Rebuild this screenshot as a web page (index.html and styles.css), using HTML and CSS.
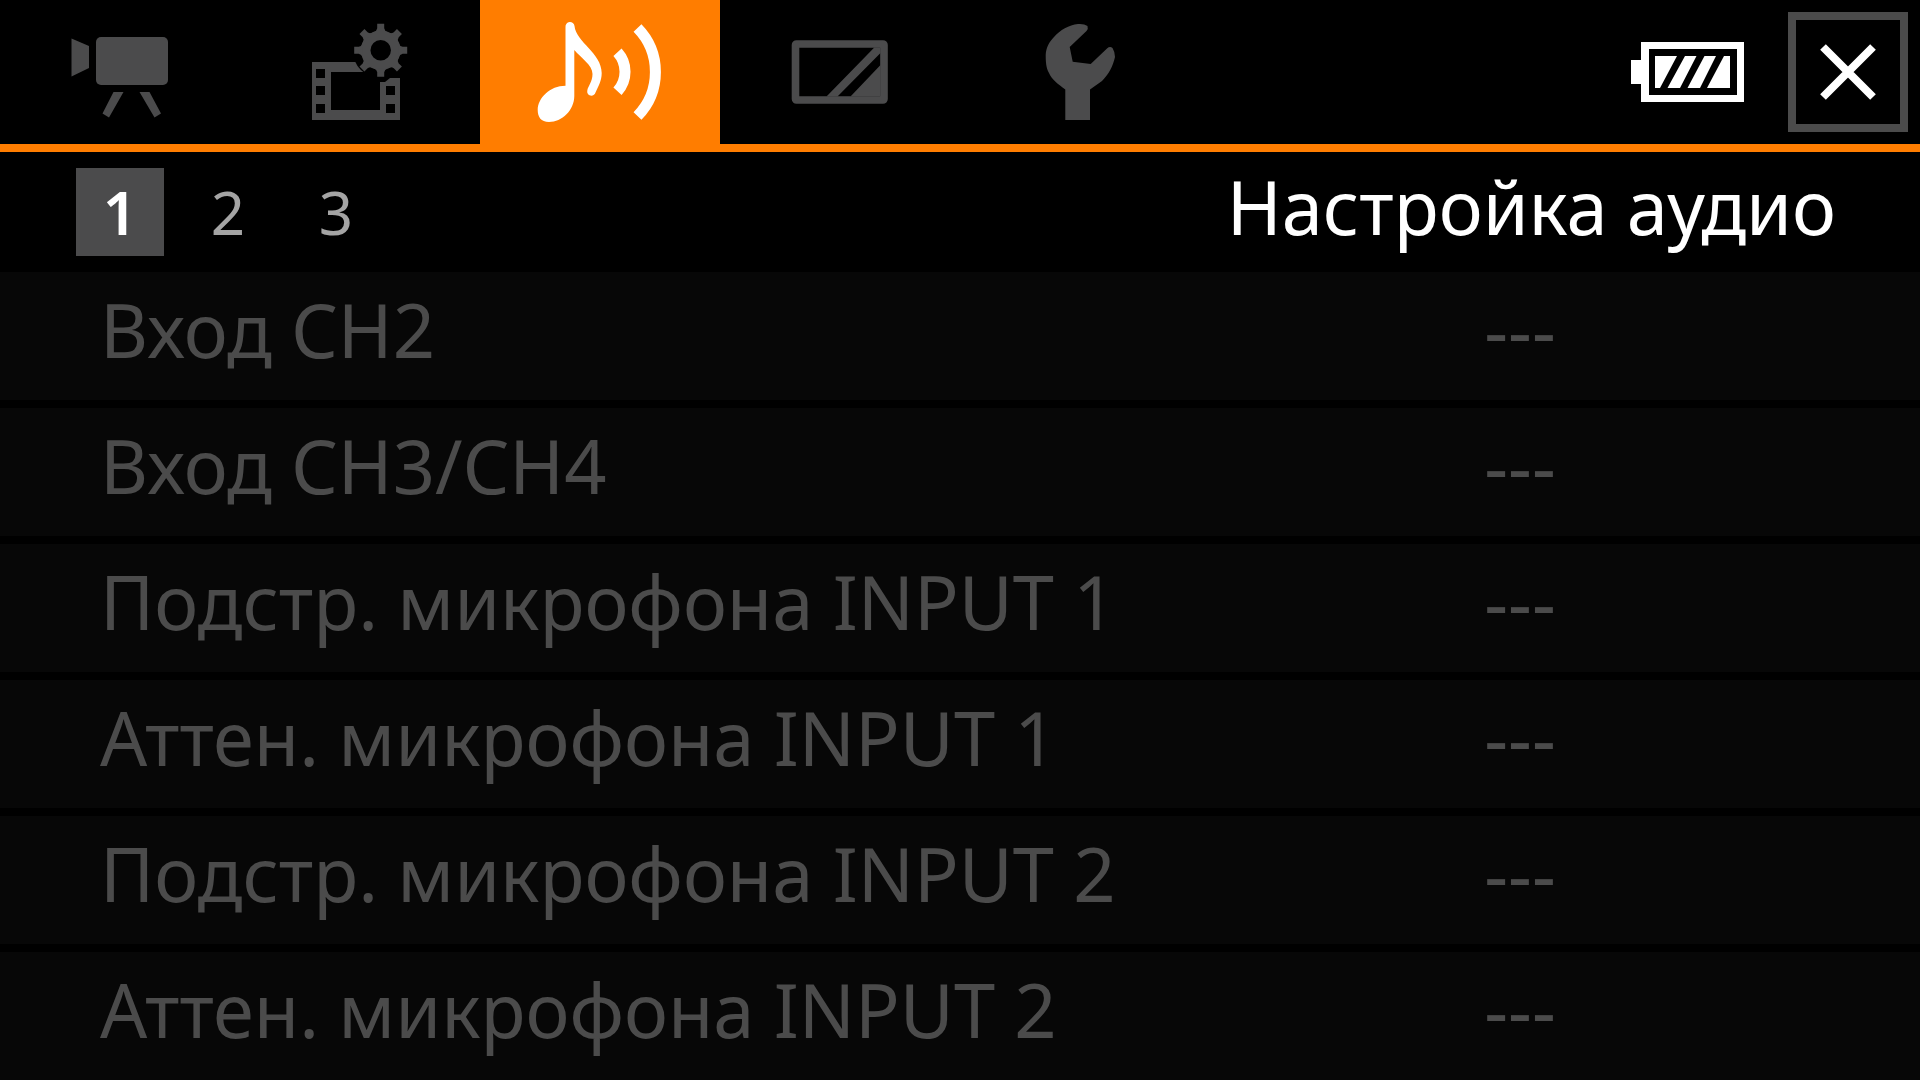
FILE: index.html
```html
<!DOCTYPE html>
<html lang="ru">
<head>
<meta charset="utf-8">
<meta name="viewport" content="width=device-width, initial-scale=1">
<title>Настройка аудио</title>
<link rel="stylesheet" href="styles.css">
</head>
<body>
<header class="topbar">
  <nav class="tabs" aria-label="Разделы меню">
    <button class="tab" type="button" aria-label="Камера">
      <svg class="tab-icon" viewBox="0 0 240 144" aria-hidden="true">
        <rect x="96" y="37" width="72" height="48" rx="5"/>
        <path d="M71.500 38.500L89 46V68L71.500 76.500ZM113.500 92H123.500L109 117.500L102.500 113.500ZM139.500 92H149.500L161 113.500L154.500 117.500Z"/>
      </svg>
    </button>
    <button class="tab" type="button" aria-label="Настройка записи">
      <svg class="tab-icon" viewBox="0 0 240 144" aria-hidden="true">
        <path fill-rule="evenodd" d="M72 62H160V120H72ZM91 72V110H140V72ZM76 69V78H85V69ZM76 86V95H85V86ZM76 104V113H85V104ZM146 86V95H155V86ZM146 104V113H155V104Z"/>
        <circle class="icon-gap" cx="140.700" cy="50.300" r="28"/>
        <path class="icon-gap" d="M134 70H161V78H150L145 82H134Z"/>
        <g transform="translate(140.700 50.300)">
          <circle r="15" fill="none" stroke="currentColor" stroke-width="9.500"/>
          <path id="teeth" d="M-3.500 -26.500H3.500V-22Q4 -19 7 -18H-7Q-4 -19 -3.500 -22ZM-3.500 26.500H3.500V22Q4 19 7 18H-7Q-4 19 -3.500 22ZM-26.500 -3.500V3.500H-22Q-19 4 -18 7V-7Q-19 -4 -22 -3.500ZM26.500 -3.500V3.500H22Q19 4 18 7V-7Q19 -4 22 -3.500Z"/>
          <use href="#teeth" transform="rotate(45)"/>
        </g>
      </svg>
    </button>
    <button class="tab tab-active" type="button" aria-label="Настройка аудио" aria-current="page">
      <svg class="tab-icon" viewBox="0 0 240 144" aria-hidden="true">
        <path d="M85.500 27A4.500 4.500 0 0 1 94.500 26C96 42 121.700 53 121.700 73C121.700 81 118 87 115.500 92.500A4.200 4.200 0 0 1 107.300 90.500C108 86 112.500 82 112.500 74C112.500 65 101 58 94.300 50V96C94.300 110 82 122 69 122C61 122 57.700 117 57.700 110C57.700 98 70 85.700 85.500 85.700Z"/>
        <path d="M137.500 52.300A29 29 0 0 1 137.500 91.300M157.500 28A63 63 0 0 1 157.500 116" fill="none" stroke="currentColor" stroke-width="11"/>
      </svg>
    </button>
    <button class="tab" type="button" aria-label="Настройка дисплея">
      <svg class="tab-icon" viewBox="0 0 240 144" aria-hidden="true">
        <rect x="75.500" y="44" width="88.500" height="56" rx="1" fill="none" stroke="currentColor" stroke-width="7.600"/>
        <path d="M154.300 47.500L106.500 96.500H117.500L160.500 53V47.500ZM160.500 65L130.500 96.500H160.500Z"/>
      </svg>
    </button>
    <button class="tab" type="button" aria-label="Настройка системы">
      <svg class="tab-icon" viewBox="0 0 240 144" aria-hidden="true">
        <path d="M105.300 120V89.500C98 84 92 80 89 73C86 68 85.700 61 85.700 55C86 48 89 42 94 37C100 30 109 25 118 24Q124 23.500 127.500 26Q128.500 29 126.500 31L109.700 47L112.700 61.700L130.700 64L147 48.500Q150 46 152.500 48Q155 52 155 57C153 66 149 74 142 81L130 89.500V120Z"/>
      </svg>
    </button>
  </nav>
  <svg class="battery" viewBox="0 0 113 60" role="img" aria-label="Аккумулятор заряжен">
    <path fill-rule="evenodd" d="M0 18H10V0H113V60H10V42H0ZM18 7V53H106V7Z"/>
    <path d="M24 14H46L29 46H24ZM54 14H65.500L49 46H36.500ZM73.500 14H85L69 46H56.500ZM93 14H99V46H76Z"/>
  </svg>
  <button class="close" type="button" aria-label="Закрыть">
    <svg class="close-icon" viewBox="0 0 56 56" aria-hidden="true">
      <path d="M3 3L53 53M53 3L3 53" fill="none" stroke="currentColor" stroke-width="8"/>
    </svg>
  </button>
</header>
<main>
  <div class="heading">
    <nav class="pages" aria-label="Страницы">
      <button class="page page-active" type="button" aria-current="page">1</button>
      <button class="page" type="button">2</button>
      <button class="page" type="button">3</button>
    </nav>
    <h1 class="title">Настройка аудио</h1>
  </div>
  <ul class="settings">
    <li><button class="setting" type="button" disabled><span class="name">Вход CH2</span><span class="value">---</span></button></li>
    <li><button class="setting" type="button" disabled><span class="name">Вход CH3/CH4</span><span class="value">---</span></button></li>
    <li><button class="setting" type="button" disabled><span class="name">Подстр. микрофона INPUT 1</span><span class="value">---</span></button></li>
    <li><button class="setting" type="button" disabled><span class="name">Аттен. микрофона INPUT 1</span><span class="value">---</span></button></li>
    <li><button class="setting" type="button" disabled><span class="name">Подстр. микрофона INPUT 2</span><span class="value">---</span></button></li>
    <li><button class="setting" type="button" disabled><span class="name">Аттен. микрофона INPUT 2</span><span class="value">---</span></button></li>
  </ul>
</main>
</body>
</html>
```
FILE: styles.css
```css
* {
  box-sizing: border-box;
}

body {
  margin: 0;
  background: #000;
  color: #fff;
  font-family: "Noto Sans", sans-serif;
}

button {
  margin: 0;
  padding: 0;
  border: 0;
  border-radius: 0;
  background: none;
  color: inherit;
  font: inherit;
}

svg {
  display: block;
  fill: currentColor;
}

.topbar {
  display: flex;
  align-items: center;
  padding-right: 12px;
  border-bottom: 8px solid #ff7d00;
}

.tabs {
  display: flex;
  margin-right: auto;
}

.tab {
  color: #4b4b4c;
}

.tab-active {
  background: #ff7d00;
  color: #fff;
}

.tab-icon {
  width: 240px;
  height: 144px;
}

.icon-gap {
  fill: #000;
}

.battery {
  width: 113px;
  height: 60px;
  margin-right: 44px;
}

.close {
  display: grid;
  place-items: center;
  width: 120px;
  height: 120px;
  border: 8px solid #4b4b4b;
}

.close-icon {
  width: 56px;
  height: 56px;
}

.heading {
  display: flex;
  align-items: flex-start;
  justify-content: space-between;
  padding: 16px 84px 16px 76px;
}

.pages {
  display: flex;
  gap: 20px;
}

.page {
  width: 88px;
  height: 88px;
  color: #a4a4a4;
  font-size: 60px;
  line-height: 88px;
}

.page-active {
  background: #4b4b4c;
  color: #fff;
  font-weight: 600;
}

.title {
  margin: 0;
  font-size: 74px;
  font-weight: 400;
  line-height: 78px;
}

.settings {
  display: grid;
  gap: 8px;
  margin: 0;
  padding: 0;
  list-style: none;
}

.setting {
  display: grid;
  grid-template-columns: 7fr 5fr;
  align-items: center;
  width: 100%;
  padding: 10px 0 22px;
  background: #070707;
  color: #4b4b4b;
  font-size: 74px;
  line-height: 96px;
  white-space: nowrap;
}

.name {
  padding-left: 100px;
  text-align: left;
}

.value {
  text-align: center;
}
```
